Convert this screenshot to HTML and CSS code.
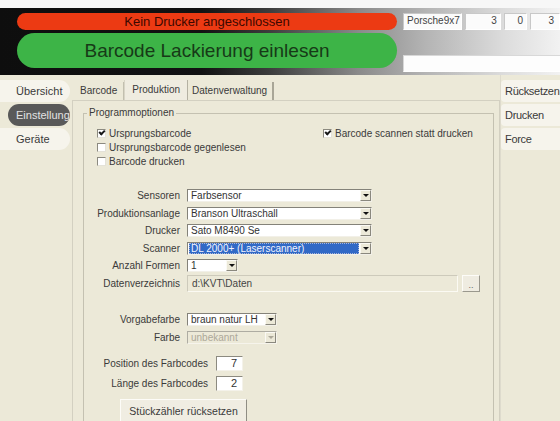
FILE: index.html
```html
<!DOCTYPE html>
<html lang="de">
<head>
<meta charset="utf-8">
<title>Barcode Lackierung</title>
<link rel="stylesheet" href="styles.css">
</head>
<body>
<div class="topstrip"></div>
<header class="banner">
  <div class="pills">
    <div class="pill pill-red">Kein Drucker angeschlossen</div>
    <div class="pill pill-green">Barcode Lackierung einlesen</div>
  </div>
  <div class="info">
    <div class="info-row">
      <div class="field f-name">Porsche9x7</div>
      <div class="field num f-a">3</div>
      <div class="field num f-b">0</div>
      <div class="field num f-c">3</div>
    </div>
    <div class="field f-wide"></div>
  </div>
</header>

<main class="main">
  <nav class="side">
    <div class="side-item">Übersicht</div>
    <div class="side-item active">Einstellung</div>
    <div class="side-item">Geräte</div>
  </nav>

  <section class="tabs">
    <div class="tabstrip">
      <div class="tab">Barcode</div>
      <div class="tab selected">Produktion</div>
      <div class="tab">Datenverwaltung</div>
    </div>
    <div class="panel">
      <fieldset class="group">
        <legend>Programmoptionen</legend>
        <div class="checks">
          <label class="check"><span class="box checked"></span>Ursprungsbarcode</label>
          <label class="check"><span class="box checked"></span>Barcode scannen statt drucken</label>
          <label class="check"><span class="box"></span>Ursprungsbarcode gegenlesen</label>
          <span></span>
          <label class="check"><span class="box"></span>Barcode drucken</label>
        </div>

        <div class="form">
          <div class="row">
            <span class="lbl">Sensoren</span>
            <div class="select s-long"><span class="val">Farbsensor</span><span class="arrow"></span></div>
          </div>
          <div class="row">
            <span class="lbl">Produktionsanlage</span>
            <div class="select s-long"><span class="val">Branson Ultraschall</span><span class="arrow"></span></div>
          </div>
          <div class="row">
            <span class="lbl">Drucker</span>
            <div class="select s-long"><span class="val">Sato M8490 Se</span><span class="arrow"></span></div>
          </div>
          <div class="row">
            <span class="lbl">Scanner</span>
            <div class="select s-long"><span class="val highlight">DL 2000+ (Laserscanner)</span><span class="arrow"></span></div>
          </div>
          <div class="row">
            <span class="lbl">Anzahl Formen</span>
            <div class="select s-short"><span class="val">1</span><span class="arrow"></span></div>
          </div>
          <div class="row row-dir">
            <span class="lbl">Datenverzeichnis</span>
            <div class="textbox disabled">d:\KVT\Daten</div>
            <div class="browse">..</div>
          </div>

          <div class="row row-color">
            <span class="lbl">Vorgabefarbe</span>
            <div class="select s-mid"><span class="val">braun natur LH</span><span class="arrow"></span></div>
          </div>
          <div class="row">
            <span class="lbl">Farbe</span>
            <div class="select s-mid disabled"><span class="val">unbekannt</span><span class="arrow"></span></div>
          </div>

          <div class="row num-row first">
            <span class="lbl">Position des Farbcodes</span>
            <div class="numbox">7</div>
          </div>
          <div class="row num-row">
            <span class="lbl">Länge des Farbcodes</span>
            <div class="numbox">2</div>
          </div>

          <div class="btn">Stückzähler rücksetzen</div>
        </div>
      </fieldset>
    </div>
  </section>

  <aside class="actions">
    <div class="action">Rücksetzen</div>
    <div class="action">Drucken</div>
    <div class="action">Force</div>
  </aside>
</main>
</body>
</html>
```

FILE: styles.css
```css
* { box-sizing: border-box; }

html, body {
  margin: 0;
  padding: 0;
}

body {
  width: 560px;
  height: 421px;
  overflow: hidden;
  background: #ece9d8;
  font-family: "Liberation Sans", Arial, sans-serif;
  font-size: 10px;
  color: #3a3a3a;
}

/* ---------- header ---------- */
.topstrip {
  height: 8px;
  background: #f7f7f7;
}

.banner {
  height: 67px;
  display: flex;
  background: linear-gradient(to right, #0e0e0e 0%, #121212 36%, #3c3c3c 48%, #8a8a8a 64%, #b4b4b4 76%, #dcdcdc 90%, #f2f2f2 100%);
}

.pills {
  width: 397px;
  padding: 5px 0 0 17px;
  display: flex;
  flex-direction: column;
  gap: 3px;
}

.pill {
  display: flex;
  align-items: center;
  justify-content: center;
  border-radius: 18px;
}

.pill-red {
  height: 17px;
  background: #ec3a13;
  color: #3c0800;
  font-size: 13px;
}

.pill-green {
  height: 35px;
  background: #3db447;
  color: #173a17;
  font-size: 19px;
}

.info {
  padding: 5px 0 0 6px;
  display: flex;
  flex-direction: column;
  flex: 1;
  min-width: 0;
}

.info-row {
  display: flex;
  gap: 3px;
  height: 17px;
}

.field {
  background: #fbfbfb;
  border: 1px solid;
  border-color: #c8c8c8 #ffffff #ffffff #c8c8c8;
  height: 17px;
  line-height: 14px;
  padding: 0 3px;
  color: #444;
  white-space: nowrap;
  overflow: hidden;
}

.num { text-align: right; }
.f-name { width: 62px; }
.f-a { width: 37px; }
.f-b { width: 24px; }
.f-c { width: 30px; flex-shrink: 0; padding-right: 5px; }

.f-wide {
  margin-top: 25px;
  width: 160px;
  background: #fdfdfd;
  border-color: #d8d8d8 #ffffff #ffffff #d8d8d8;
}

/* ---------- main area ---------- */
.main {
  display: flex;
  height: 346px;
}

.side {
  width: 72px;
  padding-top: 5px;
  display: flex;
  flex-direction: column;
  gap: 2px;
  font-size: 11px;
}

.side-item {
  height: 22px;
  margin-right: 2px;
  padding-left: 16px;
  line-height: 22px;
  color: #3a3a3a;
  background: #f6f4ec;
  border-radius: 0 11px 11px 0;
}

.side-item.active {
  margin-left: 8px;
  padding-left: 8px;
  background: #595959;
  color: #e2e2e2;
  border-radius: 11px;
}

/* ---------- tab control ---------- */
.tabs {
  width: 428px;
  display: flex;
  flex-direction: column;
  padding-top: 5px;
}

.tabstrip {
  display: flex;
  align-items: flex-end;
  height: 20px;
  padding-left: 4px;
}

.tab {
  height: 18px;
  line-height: 17px;
  padding: 0 6px 0 4px;
  border-right: 1px solid #c2bfaf;
  color: #3a3a3a;
}

.tab.selected {
  height: 20px;
  line-height: 19px;
  padding: 0 7px 0 7px;
  border-left: 1px solid #d8d5c6;
  border-right: 1px solid #b4b1a2;
  background: #efece0;
}

.tab:last-child {
  padding: 0 5px 0 4px;
  border-right: 2px solid #a9a697;
}

.panel {
  flex: 1;
  border: 1px solid #d3d0c1;
  border-bottom: none;
  padding: 0 5px 0 10px;
  overflow: hidden;
}

.group {
  margin: 5px 0 0 0;
  padding: 6px 0 0 0;
  border: 1px solid #c4c1b1;
  border-bottom: none;
  height: 320px;
  min-width: 0;
}

.group legend {
  margin-left: 3px;
  padding: 0 2px;
  line-height: 14px;
  color: #3a3a3a;
}

/* checkboxes */
.checks {
  margin-left: 13px;
  display: grid;
  grid-template-columns: 226px auto;
  grid-auto-rows: 14px;
}

.check {
  display: flex;
  align-items: center;
  gap: 3px;
  white-space: nowrap;
}

.box {
  width: 9px;
  height: 9px;
  background: #ffffff;
  border: 1px solid;
  border-color: #8c8a80 #e4e2d8 #e4e2d8 #8c8a80;
  position: relative;
}

.box.checked::after {
  content: "";
  position: absolute;
  left: 1px;
  top: 0px;
  width: 4px;
  height: 2px;
  border-left: 2px solid #1a1a1a;
  border-bottom: 2px solid #1a1a1a;
  transform: rotate(-45deg);
}

/* form rows */
.form {
  margin-top: 21px;
  display: flex;
  flex-direction: column;
}

.row {
  display: grid;
  grid-template-columns: 96px auto auto;
  column-gap: 7px;
  align-items: center;
  justify-content: start;
  margin-bottom: 4.5px;
}

.lbl {
  text-align: right;
  white-space: nowrap;
  color: #3a3a3a;
}

.select {
  height: 13px;
  display: flex;
  background: #ffffff;
  border: 1px solid;
  border-color: #848279 #f2f0e8 #f2f0e8 #848279;
  overflow: hidden;
}

.s-long { width: 185px; }
.s-short { width: 51px; }
.s-mid { width: 90px; }

.val {
  flex: 1;
  padding-left: 3px;
  line-height: 11px;
  color: #333;
  white-space: nowrap;
  overflow: hidden;
}

.val.highlight {
  margin: 0 1px 0 1px;
  padding-left: 2px;
  background: #3169c6;
  color: #f2f4ff;
  outline: 1px dotted #a9b6d8;
  outline-offset: -1px;
}

.arrow {
  width: 11px;
  flex-shrink: 0;
  background: #ece9d8;
  border: 1px solid;
  border-color: #fbfaf4 #8a887e #8a887e #fbfaf4;
  display: flex;
  align-items: center;
  justify-content: center;
}

.arrow::after {
  content: "";
  border-left: 3px solid transparent;
  border-right: 3px solid transparent;
  border-top: 3px solid #111;
}

.select.disabled {
  background: #ece9d8;
  border-color: #aeaca2 #f6f4ec #f6f4ec #aeaca2;
}

.select.disabled .val { color: #aca899; }
.select.disabled .arrow::after { border-top-color: #aca899; }

.row-dir {
  margin-top: -1.5px;
  margin-bottom: 0;
}

.textbox {
  width: 271px;
  height: 17px;
  padding-left: 4px;
  line-height: 15px;
  border: 1px solid;
  border-color: #cdcabb #fbfaf3 #fbfaf3 #cdcabb;
  color: #444;
}

.browse {
  width: 18px;
  height: 17px;
  margin-left: -3px;
  text-align: center;
  line-height: 18px;
  font-size: 9px;
  color: #666;
  background: #efece1;
  border: 1px solid;
  border-color: #fdfcf8 #9a988d #9a988d #fdfcf8;
}

.row-color { margin-top: 21px; }

.num-row {
  grid-template-columns: 124px auto;
  column-gap: 8px;
  margin-bottom: 5px;
}

.num-row.first { margin-top: 7.5px; }

.numbox {
  width: 27px;
  height: 15px;
  padding-right: 5px;
  line-height: 13px;
  text-align: right;
  font-size: 11px;
  background: #ffffff;
  border: 1px solid;
  border-color: #8c8a80 #f4f2ea #f4f2ea #8c8a80;
  color: #333;
}

.btn {
  margin: 3px 0 0 36px;
  width: 127px;
  height: 24px;
  line-height: 22px;
  text-align: center;
  font-size: 10.5px;
  color: #3a3a3a;
  background: #f0ede2;
  border: 1px solid;
  border-color: #fdfcf8 #8f8d83 #8f8d83 #fdfcf8;
}

/* ---------- right side buttons ---------- */
.actions {
  width: 60px;
  padding-top: 5px;
  display: flex;
  flex-direction: column;
  gap: 2px;
  font-size: 11px;
  border-left: 1px solid #dedbcd;
}

.action {
  height: 22px;
  line-height: 22px;
  padding-left: 4px;
  background: #f6f4ec;
  border-radius: 4px 0 0 4px;
  white-space: nowrap;
  letter-spacing: -0.3px;
  color: #3a3a3a;
}
```
